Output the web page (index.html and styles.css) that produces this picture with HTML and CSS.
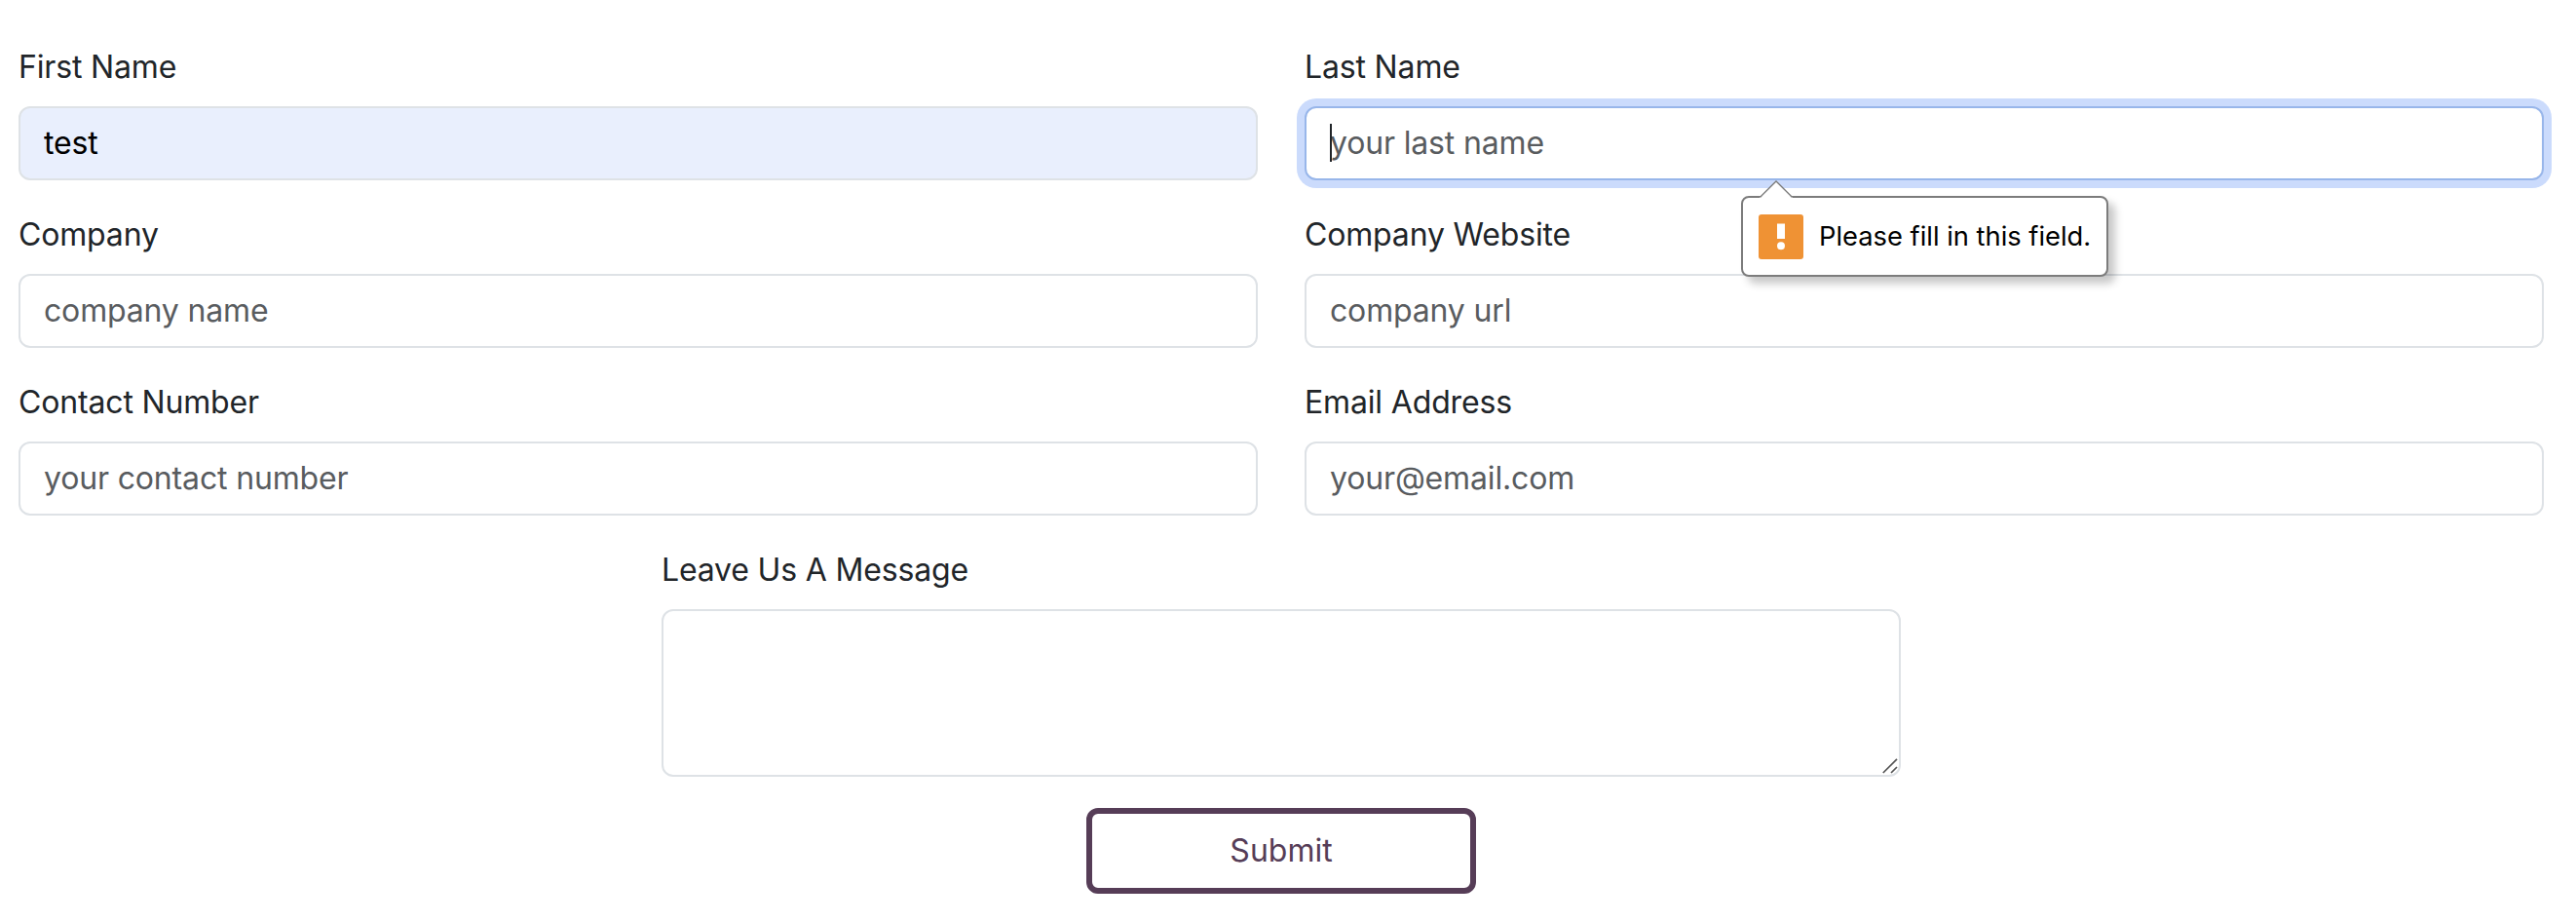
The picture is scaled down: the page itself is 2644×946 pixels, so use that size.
FILE: index.html
```html
<!DOCTYPE html>
<html lang="en">
<head>
<meta charset="utf-8">
<title>Contact</title>
<link rel="stylesheet" href="styles.css">
</head>
<body>
<form class="form" novalidate>
  <div class="grid">
    <div class="field">
      <label class="label" for="first">First Name</label>
      <input class="control control-filled" id="first" type="text" value="test">
    </div>
    <div class="field">
      <label class="label" for="last">Last Name</label>
      <div class="anchor">
        <input class="control control-focus" id="last" type="text" placeholder="your last name">
        <span class="caret"></span>
        <div class="tooltip" role="alert">
          <svg class="tooltip-arrow" width="34" height="19" viewBox="0 0 34 19"><path d="M0 19V17.4H1L17 1L33 17.4H34V19Z" fill="#fff"/><path d="M0.6 17.2L17 1L33.4 17.2" fill="none" stroke="#7c7c7c" stroke-width="1.3"/></svg>
          <svg class="tooltip-icon" width="46" height="46" viewBox="0 0 46 46"><rect width="46" height="46" rx="3" fill="#ef9234"/><rect x="19" y="9.5" width="8" height="15.5" fill="#fff"/><circle cx="23" cy="32.3" r="4" fill="#fff"/></svg>
          <span class="tooltip-text">Please fill in this field.</span>
        </div>
      </div>
    </div>
    <div class="field">
      <label class="label" for="company">Company</label>
      <input class="control" id="company" type="text" placeholder="company name">
    </div>
    <div class="field">
      <label class="label" for="site">Company Website</label>
      <input class="control" id="site" type="text" placeholder="company url">
    </div>
    <div class="field">
      <label class="label" for="phone">Contact Number</label>
      <input class="control" id="phone" type="text" placeholder="your contact number">
    </div>
    <div class="field">
      <label class="label" for="email">Email Address</label>
      <input class="control" id="email" type="text" placeholder="your@email.com">
    </div>
  </div>
  <div class="field message">
    <label class="label" for="message">Leave Us A Message</label>
    <div class="anchor">
      <textarea class="control control-area" id="message"></textarea>
      <svg class="grip" width="16" height="16" viewBox="0 0 16 16"><path d="M0.8 15L15 0.8M9 15L15 9" stroke="#555" stroke-width="1.7" fill="none"/></svg>
    </div>
  </div>
  <button class="submit" type="button">Submit</button>
</form>
</body>
</html>
```
FILE: styles.css
```css
* { box-sizing: border-box; }

body {
  margin: 0;
  background: #fff;
  color: #212529;
  font-family: Inter, "Liberation Sans", sans-serif;
  font-size: 32px;
  line-height: 48px;
}

.form {
  display: flex;
  flex-direction: column;
  align-items: center;
  gap: 32px;
  width: 2592px;
  margin-left: 19px;
  padding-top: 45px;
}

.grid {
  display: grid;
  grid-template-columns: 1fr 1fr;
  gap: 32px 48px;
  width: 100%;
}

.field {
  display: flex;
  flex-direction: column;
  gap: 16px;
}

.label { letter-spacing: -0.16px; }

.message { width: 1272px; }

.anchor {
  position: relative;
  display: flex;
}

.control {
  display: block;
  width: 100%;
  height: 76px;
  margin: 0;
  padding: 11px 24px 13px;
  border: 2px solid #dee2e6;
  border-radius: 12px;
  outline: none;
  background: #fff;
  color: #212529;
  font: inherit;
  letter-spacing: -0.16px;
}

.control::placeholder {
  color: #595c5f;
  opacity: 1;
}

.control-filled {
  background: #e9effd;
  color: #000;
}

.control-focus {
  border-color: #98b6ea;
  box-shadow: 0 0 0 8px #cbdbfc;
}

.control-area {
  height: 172px;
  resize: none;
}

.caret {
  position: absolute;
  left: 26px;
  top: 18px;
  width: 2px;
  height: 39px;
  background: #212529;
}

.grip {
  position: absolute;
  right: 3px;
  bottom: 3px;
}

.tooltip {
  position: absolute;
  z-index: 1;
  left: 448px;
  top: 92px;
  display: flex;
  align-items: center;
  gap: 16px;
  width: 377px;
  height: 83px;
  padding-left: 16px;
  border: 2px solid #7c7c7c;
  border-radius: 8px;
  background: #fff;
  box-shadow: 7px 7px 8px rgba(0, 0, 0, 0.22);
}

.tooltip-arrow {
  position: absolute;
  left: 17px;
  top: -18px;
}

.tooltip-icon { flex: none; }

.tooltip-text {
  color: #000;
  font-size: 27.3px;
  line-height: 32px;
  white-space: nowrap;
}

.submit {
  width: 400px;
  height: 88px;
  padding: 0;
  border: 6px solid #563d57;
  border-radius: 12px;
  background: #fff;
  color: #563d57;
  font: inherit;
}
```
